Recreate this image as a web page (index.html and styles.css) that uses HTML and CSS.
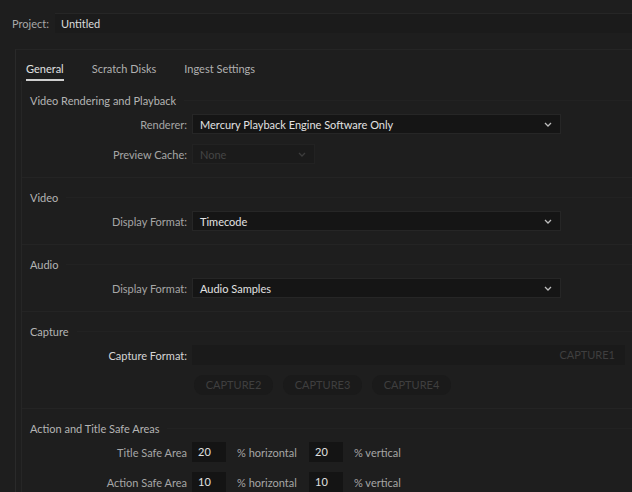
FILE: index.html
```html
<!DOCTYPE html>
<html lang="en">
  <head>
    <meta charset="UTF-8" />
    <title>Project Settings</title>
    <link rel="stylesheet" href="styles.css">
  </head>
  <body>
    <div class="project-row">
      <span class="project-label">Project:</span>
      <div class="project-field">Untitled</div>
    </div>

    <div class="panel">
      <div class="tabs">
        <span class="tab active">General</span>
        <span class="tab">Scratch Disks</span>
        <span class="tab">Ingest Settings</span>
      </div>

      <div class="content">
        <div class="section">
          <div class="heading">Video Rendering and Playback</div>
          <div class="row">
            <span class="label">Renderer:</span>
            <div class="select wide">
              <span>Mercury Playback Engine Software Only</span>
              <svg class="chev" width="8" height="5" viewBox="0 0 8 5"><polyline points="1,1 4,4 7,1" /></svg>
            </div>
          </div>
          <div class="row">
            <span class="label">Preview Cache:</span>
            <div class="select narrow disabled">
              <span>None</span>
              <svg class="chev" width="8" height="5" viewBox="0 0 8 5"><polyline points="1,1 4,4 7,1" /></svg>
            </div>
          </div>
        </div>

        <div class="section">
          <div class="heading">Video</div>
          <div class="row">
            <span class="label">Display Format:</span>
            <div class="select wide">
              <span>Timecode</span>
              <svg class="chev" width="8" height="5" viewBox="0 0 8 5"><polyline points="1,1 4,4 7,1" /></svg>
            </div>
          </div>
        </div>

        <div class="section">
          <div class="heading">Audio</div>
          <div class="row">
            <span class="label">Display Format:</span>
            <div class="select wide">
              <span>Audio Samples</span>
              <svg class="chev" width="8" height="5" viewBox="0 0 8 5"><polyline points="1,1 4,4 7,1" /></svg>
            </div>
          </div>
        </div>

        <div class="section">
          <div class="heading">Capture</div>
          <div class="row">
            <span class="label bright">Capture Format:</span>
            <div class="capture-field">CAPTURE1</div>
          </div>
          <div class="capture-buttons">
            <span class="cap-btn">CAPTURE2</span>
            <span class="cap-btn">CAPTURE3</span>
            <span class="cap-btn">CAPTURE4</span>
          </div>
        </div>

        <div class="section last">
          <div class="heading">Action and Title Safe Areas</div>
          <div class="row">
            <span class="label">Title Safe Area</span>
            <div class="num">20</div>
            <span class="unit">% horizontal</span>
            <div class="num">20</div>
            <span class="unit">% vertical</span>
          </div>
          <div class="row">
            <span class="label">Action Safe Area</span>
            <div class="num">10</div>
            <span class="unit">% horizontal</span>
            <div class="num">10</div>
            <span class="unit">% vertical</span>
          </div>
        </div>
      </div>
    </div>
  </body>
</html>
```

FILE: styles.css
```css
* {
  margin: 0;
  padding: 0;
  box-sizing: border-box;
}

body {
  font-family: Lato, "Liberation Sans", sans-serif;
  font-size: 11px;
  background: #1e1e1e;
  color: #a6a6a6;
  overflow: hidden;
  height: 492px;
}

.project-row {
  display: flex;
  align-items: center;
  padding-top: 13px;
  padding-left: 12px;
}

.project-label {
  width: 43px;
  color: #a8a8a8;
}

.project-field {
  flex: 1;
  height: 20px;
  line-height: 19px;
  padding-left: 6px;
  background: #1b1b1b;
  border-top: 1px solid #262626;
  color: #dcdcdc;
}

.panel {
  margin-top: 16px;
  margin-left: 15px;
  border-left: 1px solid #2a2a2a;
  border-top: 1px solid #252525;
}

.tabs {
  display: flex;
  gap: 28px;
  height: 31px;
  padding-left: 10px;
  padding-top: 12px;
}

.tab {
  color: #b0b0b0;
  height: 19px;
}

.tab.active {
  color: #e0e0e0;
  border-bottom: 2px solid #cfcfcf;
}

.content {
  margin-left: 5px;
  border-left: 1px solid #262626;
}

.section {
  padding: 10px 0 13px 8px;
  border-bottom: 1px solid #242424;
}

.section.last {
  border-bottom: none;
}

.heading {
  display: flex;
  align-items: center;
  gap: 8px;
  height: 18px;
  margin-bottom: 5px;
  color: #b4b4b4;
}

.heading::after {
  content: "";
  flex: 1;
  height: 1px;
  background: #222;
}

.row {
  display: flex;
  align-items: center;
  height: 20px;
  margin-bottom: 10px;
}

.row:last-child {
  margin-bottom: 0;
}

.label {
  width: 157px;
  margin-right: 5px;
  text-align: right;
  color: #a6a6a6;
}

.label.bright {
  color: #d6d6d6;
}

.select {
  display: flex;
  align-items: center;
  justify-content: space-between;
  height: 20px;
  padding: 0 8px 0 7px;
  background: #151515;
  border: 1px solid #262626;
  color: #e2e2e2;
}

.select.wide {
  width: 369px;
}

.select.narrow {
  width: 123px;
}

.select.disabled {
  background: #1b1b1b;
  border-color: #222;
  color: #454545;
}

.chev {
  fill: none;
  stroke: #bdbdbd;
  stroke-width: 1.3;
}

.disabled .chev {
  stroke: #3c3c3c;
}

.capture-field {
  width: 433px;
  height: 20px;
  line-height: 20px;
  padding-right: 10px;
  text-align: right;
  background: #1a1a1a;
  color: #3f3f3f;
}

.capture-buttons {
  display: flex;
  gap: 10px;
  margin-top: 10px;
  margin-left: 164px;
}

.cap-btn {
  width: 79px;
  height: 20px;
  line-height: 20px;
  text-align: center;
  border-radius: 9px;
  background: #1a1a1a;
  color: #3f3f3f;
}

.num {
  width: 34px;
  height: 20px;
  line-height: 20px;
  padding-left: 6px;
  background: #141414;
  color: #e0e0e0;
}

.unit {
  width: 61px;
  margin: 0 11px;
  white-space: nowrap;
  color: #a6a6a6;
}
```
